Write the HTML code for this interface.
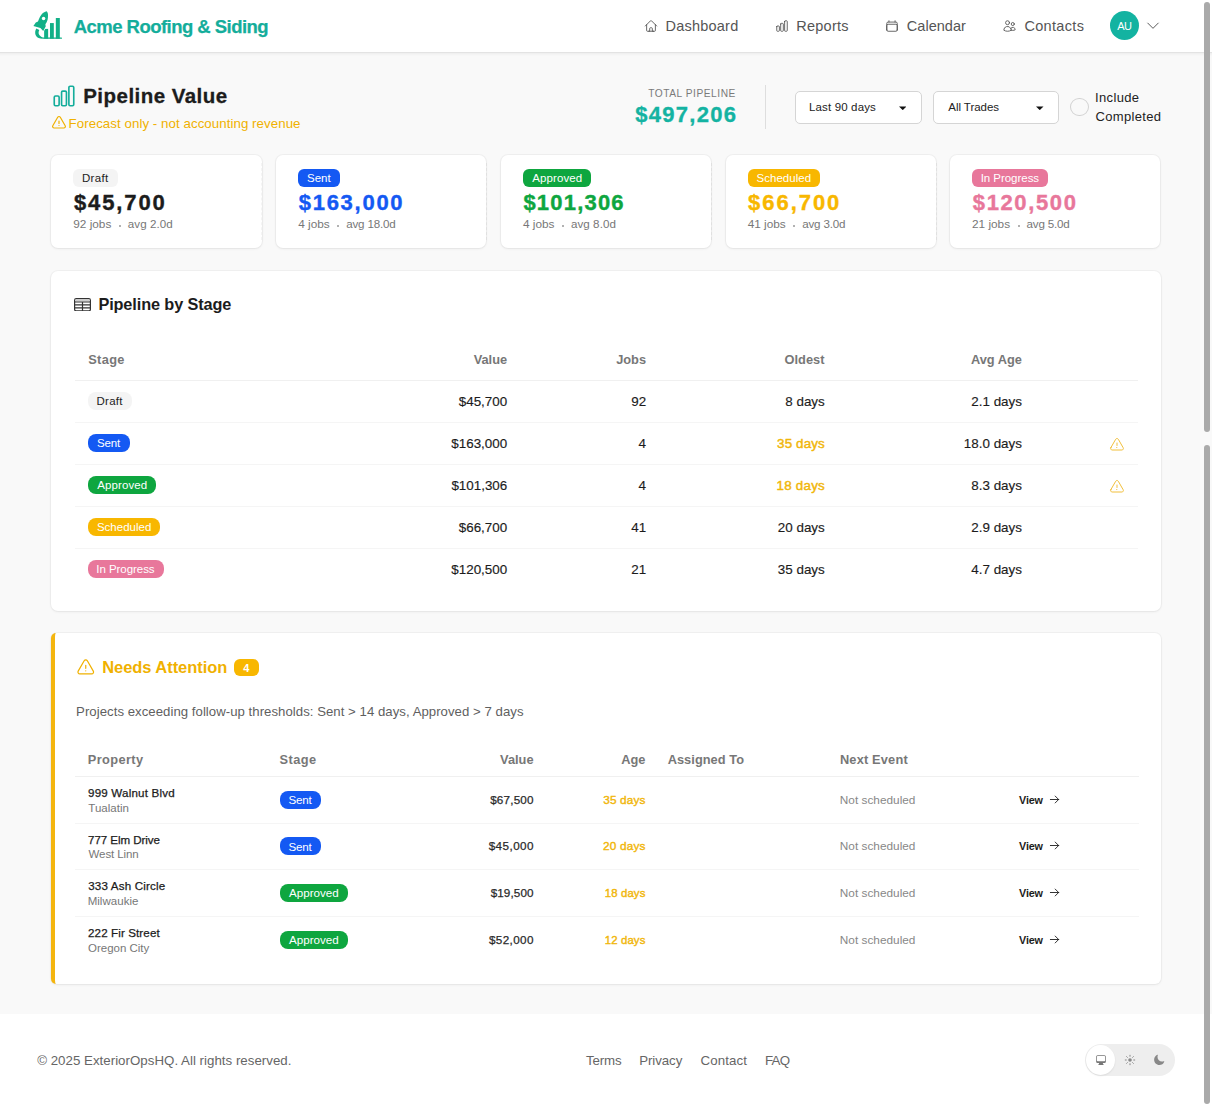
<!DOCTYPE html>
<html><head><meta charset="utf-8"><title>Pipeline Value</title>
<style>
html,body{margin:0;padding:0;}
body{width:1212px;height:1106px;overflow:hidden;position:relative;background:#f9f9f9;font-family:"Liberation Sans",sans-serif;}
.t{position:absolute;white-space:nowrap;font-family:"Liberation Sans",sans-serif;}
</style></head><body>
<div style="position:absolute;left:0px;top:0px;width:1212px;height:52px;background:#fff"></div>
<div style="position:absolute;left:0px;top:52px;width:1212px;height:1px;background:#e3e3e3"></div>
<div style="position:absolute;left:0px;top:53px;width:1212px;height:3px;background:linear-gradient(rgba(0,0,0,.045),rgba(0,0,0,0))"></div>
<svg style="position:absolute;left:30px;top:8px;" width="36" height="34" viewBox="30 8 36 34"><g fill="#12b087"><path d="M36.3,28.6 C35.2,30.5 34.9,32.8 35.5,34.8 C36.1,36.4 37.2,37.6 38.6,38.1 C39.8,38.6 41,38.8 42.3,38.8 L42.9,37.5 C41.6,37.1 40.6,36.5 39.8,35.6 C38.9,34.6 38.5,33.4 38.6,32.5 C38.6,31.6 38.9,30.8 39.3,30.1 Z"/><rect x="44.14" y="28.9" width="4" height="9.8"/><rect x="49.98" y="23.06" width="3.84" height="15.6"/><rect x="55.82" y="18" width="4" height="20.7"/><rect x="42.3" y="37.5" width="19.7" height="1.25" rx="0.6"/><path stroke="#fff" stroke-width="1.4" stroke-linejoin="round" style="paint-order:stroke fill" d="M46.6,11.2 C47.6,12.2 48.1,13.5 48.0,15 C48.1,16.8 47.9,18.3 47.6,19.7 C47.1,21.5 46.3,23 45.4,24.3 L45.7,26.4 L43.2,30.9 L40.4,28 L33.4,26 L35.8,22.5 L38,21.5 C38.6,19.8 39.1,18.3 39.9,16.9 C40.8,15.3 41.8,14 42.9,13.1 C44.1,12.2 45.3,11.6 46.6,11.2 Z"/></g><circle cx="43.55" cy="18.6" r="1.75" fill="#fff"/></svg>
<div class="t" style="left:73.74px;top:18.00px;font-size:18.5px;line-height:18.5px;font-weight:700;color:#14ad9b;letter-spacing:-0.534px;-webkit-text-stroke:0.25px #14ad9b">Acme Roofing &amp; Siding</div>
<svg style="position:absolute;left:644px;top:19px;" width="14" height="14" viewBox="0 0 24 24"><path fill="none" stroke="#555" stroke-width="1.5" stroke-linecap="round" stroke-linejoin="round" d="m2.25 12 8.954-8.955c.44-.439 1.152-.439 1.591 0L21.75 12M4.5 9.75v10.125c0 .621.504 1.125 1.125 1.125H9.75v-4.875c0-.621.504-1.125 1.125-1.125h2.25c.621 0 1.125.504 1.125 1.125V21h4.125c.621 0 1.125-.504 1.125-1.125V9.75M8.25 21h8.25"/></svg>
<div class="t" style="left:665.60px;top:19.00px;font-size:14.5px;line-height:14.5px;font-weight:400;color:#555;letter-spacing:0.212px;">Dashboard</div>
<svg style="position:absolute;left:775px;top:19px;" width="14" height="14" viewBox="0 0 24 24"><path fill="none" stroke="#555" stroke-width="1.5" stroke-linecap="round" stroke-linejoin="round" d="M3 13.125C3 12.504 3.504 12 4.125 12h2.25c.621 0 1.125.504 1.125 1.125v6.75C7.5 20.496 6.996 21 6.375 21h-2.25A1.125 1.125 0 0 1 3 19.875v-6.75ZM9.75 8.625c0-.621.504-1.125 1.125-1.125h2.25c.621 0 1.125.504 1.125 1.125v11.25c0 .621-.504 1.125-1.125 1.125h-2.25a1.125 1.125 0 0 1-1.125-1.125V8.625ZM16.5 4.125c0-.621.504-1.125 1.125-1.125h2.25C20.496 3 21 3.504 21 4.125v15.75c0 .621-.504 1.125-1.125 1.125h-2.25a1.125 1.125 0 0 1-1.125-1.125V4.125Z"/></svg>
<div class="t" style="left:796.30px;top:19.00px;font-size:14.5px;line-height:14.5px;font-weight:400;color:#555;letter-spacing:0.236px;">Reports</div>
<svg style="position:absolute;left:885px;top:19px;" width="14" height="14" viewBox="0 0 24 24"><path fill="none" stroke="#555" stroke-width="1.5" stroke-linecap="round" stroke-linejoin="round" d="M6.75 3v2.25M17.25 3v2.25M3 18.75V7.5a2.25 2.25 0 0 1 2.25-2.25h13.5A2.25 2.25 0 0 1 21 7.5v11.25m-18 0A2.25 2.25 0 0 0 5.25 21h13.5A2.25 2.25 0 0 0 21 18.75m-18 0v-7.5A2.25 2.25 0 0 1 5.25 9h13.5A2.25 2.25 0 0 1 21 11.25v7.5"/></svg>
<div class="t" style="left:906.77px;top:19.00px;font-size:14.5px;line-height:14.5px;font-weight:400;color:#555;letter-spacing:0.044px;">Calendar</div>
<svg style="position:absolute;left:1002px;top:19px;" width="15" height="14" viewBox="0 0 24 24"><path fill="none" stroke="#555" stroke-width="1.5" stroke-linecap="round" stroke-linejoin="round" d="M15 19.128a9.38 9.38 0 0 0 2.625.372 9.337 9.337 0 0 0 4.121-.952 4.125 4.125 0 0 0-7.533-2.493M15 19.128v-.003c0-1.113-.285-2.16-.786-3.07M15 19.128v.106A12.318 12.318 0 0 1 8.624 21c-2.331 0-4.512-.645-6.374-1.766l-.001-.109a6.375 6.375 0 0 1 11.964-3.07M12 6.375a3.375 3.375 0 1 1-6.75 0 3.375 3.375 0 0 1 6.75 0Zm8.25 2.25a2.625 2.625 0 1 1-5.25 0 2.625 2.625 0 0 1 5.25 0Z"/></svg>
<div class="t" style="left:1024.38px;top:19.00px;font-size:14.5px;line-height:14.5px;font-weight:400;color:#555;letter-spacing:0.328px;">Contacts</div>
<div style="position:absolute;left:1110px;top:11px;width:29px;height:29px;border-radius:50%;background:#13b3a1"></div>
<div class="t" style="left:1117.17px;top:21.00px;font-size:11px;line-height:11px;font-weight:400;color:#fff;letter-spacing:-0.610px;">AU</div>
<svg style="position:absolute;left:1146px;top:20px;" width="14" height="12" viewBox="0 0 24 20"><path fill="none" stroke="#444" stroke-width="1.5" stroke-linecap="round" stroke-linejoin="round" stroke-width="2" d="m21 5-9 9-9-9"/></svg>
<svg style="position:absolute;left:51px;top:83px;" width="26" height="26" viewBox="0 0 24 24"><path fill="none" stroke="#14ad9b" stroke-width="1.5" d="M3 13.125C3 12.504 3.504 12 4.125 12h2.25c.621 0 1.125.504 1.125 1.125v6.75C7.5 20.496 6.996 21 6.375 21h-2.25A1.125 1.125 0 0 1 3 19.875v-6.75ZM9.75 8.625c0-.621.504-1.125 1.125-1.125h2.25c.621 0 1.125.504 1.125 1.125v11.25c0 .621-.504 1.125-1.125 1.125h-2.25a1.125 1.125 0 0 1-1.125-1.125V8.625ZM16.5 4.125c0-.621.504-1.125 1.125-1.125h2.25C20.496 3 21 3.504 21 4.125v15.75c0 .621-.504 1.125-1.125 1.125h-2.25a1.125 1.125 0 0 1-1.125-1.125V4.125Z"/></svg>
<div class="t" style="left:83.22px;top:86.00px;font-size:20.5px;line-height:20.5px;font-weight:700;color:#1c1c1c;letter-spacing:0.468px;-webkit-text-stroke:0.3px #1c1c1c">Pipeline Value</div>
<svg style="position:absolute;left:50.6px;top:114.6px;" width="16" height="16" viewBox="0 0 24 24"><path fill="none" stroke="#f0b100" stroke-width="1.8" stroke-linecap="round" stroke-linejoin="round" d="M12 9v3.75m-9.303 3.376c-.866 1.5.217 3.374 1.948 3.374h14.71c1.73 0 2.813-1.874 1.948-3.374L13.949 3.378c-.866-1.5-3.032-1.5-3.898 0L2.697 16.126ZM12 15.75h.007v.008H12v-.008Z"/></svg>
<div class="t" style="left:68.60px;top:117.00px;font-size:13.3px;line-height:13.3px;font-weight:400;color:#f0b100;letter-spacing:0.055px;">Forecast only - not accounting revenue</div>
<div class="t" style="left:648.17px;top:89.00px;font-size:10.2px;line-height:10.2px;font-weight:400;color:#7a7a7a;letter-spacing:0.541px;">TOTAL PIPELINE</div>
<div class="t" style="left:635.33px;top:104.00px;font-size:22px;line-height:22px;font-weight:700;color:#14b3a2;letter-spacing:1.258px;-webkit-text-stroke:0.35px #14b3a2">$497,206</div>
<div style="position:absolute;left:764.5px;top:85px;width:1.5px;height:44px;background:#dedede"></div>
<div style="position:absolute;left:794.5px;top:91px;width:127.0px;height:32.5px;background:#fff;border:1px solid #d5d5d5;border-radius:5px;box-sizing:border-box"></div>
<div class="t" style="left:809.05px;top:102.00px;font-size:11.5px;line-height:11.5px;font-weight:400;color:#222;letter-spacing:0.141px;">Last 90 days</div>
<svg style="position:absolute;left:898.5px;top:105.5px;" width="7.5" height="4.5" viewBox="0 0 8 4"><path d="M0 0H8L4 4Z" fill="#111"/></svg>
<div style="position:absolute;left:932.8px;top:91px;width:126.0px;height:32.5px;background:#fff;border:1px solid #d5d5d5;border-radius:5px;box-sizing:border-box"></div>
<div class="t" style="left:948.27px;top:102.00px;font-size:11.5px;line-height:11.5px;font-weight:400;color:#222;letter-spacing:-0.046px;">All Trades</div>
<svg style="position:absolute;left:1036.3px;top:105.5px;" width="7.5" height="4.5" viewBox="0 0 8 4"><path d="M0 0H8L4 4Z" fill="#111"/></svg>
<div style="position:absolute;left:1070.4px;top:98px;width:18.199999999999818px;height:18px;border:1px solid #d2d2d2;border-radius:50%;background:#f9f9f9;box-sizing:border-box"></div>
<div class="t" style="left:1095.00px;top:91.00px;font-size:13px;line-height:13px;font-weight:400;color:#222;letter-spacing:0.360px;">Include</div>
<div class="t" style="left:1095.55px;top:110.00px;font-size:13px;line-height:13px;font-weight:400;color:#222;letter-spacing:0.313px;">Completed</div>
<div style="position:absolute;left:51.4px;top:154.5px;width:210.29999999999998px;height:93.5px;background:#fff;border-radius:7px;box-shadow:0 0 0 1px rgba(0,0,0,.035),0 1px 3px rgba(0,0,0,.06)"></div>
<div style="position:absolute;left:260.4px;top:163px;width:1.0px;height:77px;border-right:1px dashed rgba(0,0,0,.045)"></div>
<div style="position:absolute;left:73.4px;top:169.1px;width:44.2px;height:18.099999999999994px;background:#f4f4f4;border-radius:6px"></div>
<div class="t" style="left:81.95px;top:173.00px;font-size:11.5px;line-height:11.5px;font-weight:400;color:#222;letter-spacing:0.327px;">Draft</div>
<div class="t" style="left:74.02px;top:192.00px;font-size:22px;line-height:22px;font-weight:700;color:#1c1c1c;letter-spacing:1.863px;-webkit-text-stroke:0.4px #1c1c1c">$45,700</div>
<div class="t" style="left:73.24px;top:219.00px;font-size:11.8px;line-height:11.8px;font-weight:400;color:#777;letter-spacing:0.000px;">92 jobs</div>
<div style="position:absolute;left:118.8815px;top:224.5px;width:2.0px;height:2.0px;background:#999;border-radius:50%"></div>
<div class="t" style="left:127.79px;top:218.00px;font-size:11.6px;line-height:11.6px;font-weight:400;color:#777;letter-spacing:0.064px;">avg 2.0d</div>
<div style="position:absolute;left:276.09999999999997px;top:154.5px;width:210.3px;height:93.5px;background:#fff;border-radius:7px;box-shadow:0 0 0 1px rgba(0,0,0,.035),0 1px 3px rgba(0,0,0,.06)"></div>
<div style="position:absolute;left:485.09999999999997px;top:163px;width:1.0px;height:77px;border-right:1px dashed rgba(0,0,0,.045)"></div>
<div style="position:absolute;left:298.09999999999997px;top:169.1px;width:41.89999999999998px;height:18.099999999999994px;background:#1459f3;border-radius:6px"></div>
<div class="t" style="left:307.08px;top:173.00px;font-size:11.5px;line-height:11.5px;font-weight:400;color:#fff;letter-spacing:-0.053px;">Sent</div>
<div class="t" style="left:298.72px;top:192.00px;font-size:22px;line-height:22px;font-weight:700;color:#1459f3;letter-spacing:1.731px;-webkit-text-stroke:0.4px #1459f3">$163,000</div>
<div class="t" style="left:298.23px;top:219.00px;font-size:11.8px;line-height:11.8px;font-weight:400;color:#777;letter-spacing:0.000px;">4 jobs</div>
<div style="position:absolute;left:337.29799999999994px;top:224.5px;width:2.0px;height:2.0px;background:#999;border-radius:50%"></div>
<div class="t" style="left:346.20px;top:218.00px;font-size:11.6px;line-height:11.6px;font-weight:400;color:#777;letter-spacing:-0.167px;">avg 18.0d</div>
<div style="position:absolute;left:500.79999999999995px;top:154.5px;width:210.29999999999995px;height:93.5px;background:#fff;border-radius:7px;box-shadow:0 0 0 1px rgba(0,0,0,.035),0 1px 3px rgba(0,0,0,.06)"></div>
<div style="position:absolute;left:709.8px;top:163px;width:1.0px;height:77px;border-right:1px dashed rgba(0,0,0,.045)"></div>
<div style="position:absolute;left:522.8px;top:169.1px;width:68.20000000000005px;height:18.099999999999994px;background:#0ea63f;border-radius:6px"></div>
<div class="t" style="left:532.27px;top:173.00px;font-size:11.5px;line-height:11.5px;font-weight:400;color:#fff;letter-spacing:0.104px;">Approved</div>
<div class="t" style="left:523.42px;top:192.00px;font-size:22px;line-height:22px;font-weight:700;color:#0ea63f;letter-spacing:1.201px;-webkit-text-stroke:0.4px #0ea63f">$101,306</div>
<div class="t" style="left:522.93px;top:219.00px;font-size:11.8px;line-height:11.8px;font-weight:400;color:#777;letter-spacing:0.000px;">4 jobs</div>
<div style="position:absolute;left:561.9979999999999px;top:224.5px;width:2.0px;height:2.0px;background:#999;border-radius:50%"></div>
<div class="t" style="left:570.90px;top:218.00px;font-size:11.6px;line-height:11.6px;font-weight:400;color:#777;letter-spacing:0.076px;">avg 8.0d</div>
<div style="position:absolute;left:725.4999999999999px;top:154.5px;width:210.30000000000007px;height:93.5px;background:#fff;border-radius:7px;box-shadow:0 0 0 1px rgba(0,0,0,.035),0 1px 3px rgba(0,0,0,.06)"></div>
<div style="position:absolute;left:934.4999999999999px;top:163px;width:1.0px;height:77px;border-right:1px dashed rgba(0,0,0,.045)"></div>
<div style="position:absolute;left:747.4999999999999px;top:169.1px;width:72.39999999999998px;height:18.099999999999994px;background:#f8b700;border-radius:6px"></div>
<div class="t" style="left:756.48px;top:173.00px;font-size:11.5px;line-height:11.5px;font-weight:400;color:#fff;letter-spacing:0.037px;">Scheduled</div>
<div class="t" style="left:748.12px;top:192.00px;font-size:22px;line-height:22px;font-weight:700;color:#f8b700;letter-spacing:1.947px;-webkit-text-stroke:0.4px #f8b700">$66,700</div>
<div class="t" style="left:747.63px;top:219.00px;font-size:11.8px;line-height:11.8px;font-weight:400;color:#777;letter-spacing:0.000px;">41 jobs</div>
<div style="position:absolute;left:793.2764999999998px;top:224.5px;width:2.0px;height:2.0px;background:#999;border-radius:50%"></div>
<div class="t" style="left:802.18px;top:218.00px;font-size:11.6px;line-height:11.6px;font-weight:400;color:#777;letter-spacing:-0.163px;">avg 3.0d</div>
<div style="position:absolute;left:950.1999999999999px;top:154.5px;width:210.30000000000007px;height:93.5px;background:#fff;border-radius:7px;box-shadow:0 0 0 1px rgba(0,0,0,.035),0 1px 3px rgba(0,0,0,.06)"></div>
<div style="position:absolute;left:972.1999999999999px;top:169.1px;width:75.99999999999989px;height:18.099999999999994px;background:#e8779b;border-radius:6px"></div>
<div class="t" style="left:980.64px;top:173.00px;font-size:11.5px;line-height:11.5px;font-weight:400;color:#fff;letter-spacing:-0.033px;">In Progress</div>
<div class="t" style="left:972.82px;top:192.00px;font-size:22px;line-height:22px;font-weight:700;color:#e8779b;letter-spacing:1.616px;-webkit-text-stroke:0.4px #e8779b">$120,500</div>
<div class="t" style="left:972.01px;top:219.00px;font-size:11.8px;line-height:11.8px;font-weight:400;color:#777;letter-spacing:0.000px;">21 jobs</div>
<div style="position:absolute;left:1017.6519999999999px;top:224.5px;width:2.0px;height:2.0px;background:#999;border-radius:50%"></div>
<div class="t" style="left:1026.56px;top:218.00px;font-size:11.6px;line-height:11.6px;font-weight:400;color:#777;letter-spacing:-0.174px;">avg 5.0d</div>
<div style="position:absolute;left:51.4px;top:271.4px;width:1109.3px;height:340.1px;background:#fff;border-radius:7px;box-shadow:0 0 0 1px rgba(0,0,0,.03),0 1px 3px rgba(0,0,0,.06)"></div>
<svg style="position:absolute;left:74px;top:297.5px;" width="17" height="13.5" viewBox="0 0 17 13.5"><g fill="none" stroke="#333" stroke-width="1.2"><rect x="0.6" y="0.6" width="15.8" height="12.3" rx="1.6"/><path d="M0.6 3.9H16.4M0.6 6.9H16.4M0.6 9.9H16.4M8.5 3.9V12.9"/></g><rect x="1.4" y="1.4" width="14.2" height="2" fill="#ccc"/></svg>
<div class="t" style="left:98.40px;top:296.00px;font-size:16.3px;line-height:16.3px;font-weight:700;color:#1c1c1c;letter-spacing:-0.115px;">Pipeline by Stage</div>
<div class="t" style="left:88.22px;top:354.00px;font-size:12.8px;line-height:12.8px;font-weight:700;color:#777;letter-spacing:0.338px;">Stage</div>
<div class="t" style="left:473.68px;top:354.00px;font-size:12.8px;line-height:12.8px;font-weight:700;color:#777;letter-spacing:0.000px;">Value</div>
<div class="t" style="left:616.16px;top:354.00px;font-size:12.8px;line-height:12.8px;font-weight:700;color:#777;letter-spacing:0.000px;">Jobs</div>
<div class="t" style="left:784.62px;top:354.00px;font-size:12.8px;line-height:12.8px;font-weight:700;color:#777;letter-spacing:0.000px;">Oldest</div>
<div class="t" style="left:970.97px;top:354.00px;font-size:12.8px;line-height:12.8px;font-weight:700;color:#777;letter-spacing:0.000px;">Avg Age</div>
<div style="position:absolute;left:75px;top:380px;width:1063px;height:1px;background:#f0f0f0"></div>
<div style="position:absolute;left:75px;top:422px;width:1063px;height:1px;background:#f5f5f5"></div>
<div style="position:absolute;left:87.7px;top:392px;width:44.3px;height:18px;background:#f4f4f4;border-radius:8px"></div>
<div class="t" style="left:96.45px;top:396.00px;font-size:11.5px;line-height:11.5px;font-weight:400;color:#222;letter-spacing:0.302px;">Draft</div>
<div class="t" style="left:458.79px;top:395.00px;font-size:13.4px;line-height:13.4px;font-weight:400;color:#1c1c1c;letter-spacing:0.000px;-webkit-text-stroke:0.15px #1c1c1c">$45,700</div>
<div class="t" style="left:631.30px;top:395.00px;font-size:13.4px;line-height:13.4px;font-weight:400;color:#1c1c1c;letter-spacing:0.000px;-webkit-text-stroke:0.15px #1c1c1c">92</div>
<div class="t" style="left:785.27px;top:395.00px;font-size:13.4px;line-height:13.4px;font-weight:400;color:#1c1c1c;letter-spacing:0.000px;-webkit-text-stroke:0.15px #1c1c1c">8 days</div>
<div class="t" style="left:971.32px;top:395.00px;font-size:13.4px;line-height:13.4px;font-weight:400;color:#1c1c1c;letter-spacing:0.000px;-webkit-text-stroke:0.15px #1c1c1c">2.1 days</div>
<div style="position:absolute;left:75px;top:464px;width:1063px;height:1px;background:#f5f5f5"></div>
<div style="position:absolute;left:87.7px;top:434px;width:41.89999999999999px;height:18px;background:#1459f3;border-radius:8px"></div>
<div class="t" style="left:96.88px;top:438.00px;font-size:11.5px;line-height:11.5px;font-weight:400;color:#fff;letter-spacing:-0.119px;">Sent</div>
<div class="t" style="left:451.32px;top:437.00px;font-size:13.4px;line-height:13.4px;font-weight:400;color:#1c1c1c;letter-spacing:0.000px;-webkit-text-stroke:0.15px #1c1c1c">$163,000</div>
<div class="t" style="left:638.43px;top:437.00px;font-size:13.4px;line-height:13.4px;font-weight:400;color:#1c1c1c;letter-spacing:0.000px;-webkit-text-stroke:0.15px #1c1c1c">4</div>
<div class="t" style="left:777.10px;top:437.00px;font-size:13.4px;line-height:13.4px;font-weight:400;color:#f1b60a;letter-spacing:0.123px;-webkit-text-stroke:0.45px #f1b60a">35 days</div>
<svg style="position:absolute;left:1108.5px;top:436.5px;" width="16" height="16" viewBox="0 0 24 24"><path fill="none" stroke="#f2bf3a" stroke-width="1.5" stroke-linecap="round" stroke-linejoin="round" d="M12 9v3.75m-9.303 3.376c-.866 1.5.217 3.374 1.948 3.374h14.71c1.73 0 2.813-1.874 1.948-3.374L13.949 3.378c-.866-1.5-3.032-1.5-3.898 0L2.697 16.126ZM12 15.75h.007v.008H12v-.008Z"/></svg>
<div class="t" style="left:963.85px;top:437.00px;font-size:13.4px;line-height:13.4px;font-weight:400;color:#1c1c1c;letter-spacing:0.000px;-webkit-text-stroke:0.15px #1c1c1c">18.0 days</div>
<div style="position:absolute;left:75px;top:506px;width:1063px;height:1px;background:#f5f5f5"></div>
<div style="position:absolute;left:87.7px;top:476px;width:68.2px;height:18px;background:#0ea63f;border-radius:8px"></div>
<div class="t" style="left:97.37px;top:480.00px;font-size:11.5px;line-height:11.5px;font-weight:400;color:#fff;letter-spacing:0.075px;">Approved</div>
<div class="t" style="left:451.39px;top:479.00px;font-size:13.4px;line-height:13.4px;font-weight:400;color:#1c1c1c;letter-spacing:0.000px;-webkit-text-stroke:0.15px #1c1c1c">$101,306</div>
<div class="t" style="left:638.43px;top:479.00px;font-size:13.4px;line-height:13.4px;font-weight:400;color:#1c1c1c;letter-spacing:0.000px;-webkit-text-stroke:0.15px #1c1c1c">4</div>
<div class="t" style="left:776.60px;top:479.00px;font-size:13.4px;line-height:13.4px;font-weight:400;color:#f1b60a;letter-spacing:0.207px;-webkit-text-stroke:0.45px #f1b60a">18 days</div>
<svg style="position:absolute;left:1108.5px;top:478.5px;" width="16" height="16" viewBox="0 0 24 24"><path fill="none" stroke="#f2bf3a" stroke-width="1.5" stroke-linecap="round" stroke-linejoin="round" d="M12 9v3.75m-9.303 3.376c-.866 1.5.217 3.374 1.948 3.374h14.71c1.73 0 2.813-1.874 1.948-3.374L13.949 3.378c-.866-1.5-3.032-1.5-3.898 0L2.697 16.126ZM12 15.75h.007v.008H12v-.008Z"/></svg>
<div class="t" style="left:971.32px;top:479.00px;font-size:13.4px;line-height:13.4px;font-weight:400;color:#1c1c1c;letter-spacing:0.000px;-webkit-text-stroke:0.15px #1c1c1c">8.3 days</div>
<div style="position:absolute;left:75px;top:548px;width:1063px;height:1px;background:#f5f5f5"></div>
<div style="position:absolute;left:87.7px;top:518px;width:72.40000000000002px;height:18px;background:#f8b700;border-radius:8px"></div>
<div class="t" style="left:96.88px;top:522.00px;font-size:11.5px;line-height:11.5px;font-weight:400;color:#fff;letter-spacing:0.012px;">Scheduled</div>
<div class="t" style="left:458.79px;top:521.00px;font-size:13.4px;line-height:13.4px;font-weight:400;color:#1c1c1c;letter-spacing:0.000px;-webkit-text-stroke:0.15px #1c1c1c">$66,700</div>
<div class="t" style="left:631.26px;top:521.00px;font-size:13.4px;line-height:13.4px;font-weight:400;color:#1c1c1c;letter-spacing:0.000px;-webkit-text-stroke:0.15px #1c1c1c">41</div>
<div class="t" style="left:777.84px;top:521.00px;font-size:13.4px;line-height:13.4px;font-weight:400;color:#1c1c1c;letter-spacing:0.000px;-webkit-text-stroke:0.15px #1c1c1c">20 days</div>
<div class="t" style="left:971.32px;top:521.00px;font-size:13.4px;line-height:13.4px;font-weight:400;color:#1c1c1c;letter-spacing:0.000px;-webkit-text-stroke:0.15px #1c1c1c">2.9 days</div>
<div style="position:absolute;left:87.7px;top:560px;width:75.99999999999999px;height:18px;background:#e8779b;border-radius:8px"></div>
<div class="t" style="left:96.34px;top:564.00px;font-size:11.5px;line-height:11.5px;font-weight:400;color:#fff;letter-spacing:-0.053px;">In Progress</div>
<div class="t" style="left:451.32px;top:563.00px;font-size:13.4px;line-height:13.4px;font-weight:400;color:#1c1c1c;letter-spacing:0.000px;-webkit-text-stroke:0.15px #1c1c1c">$120,500</div>
<div class="t" style="left:631.26px;top:563.00px;font-size:13.4px;line-height:13.4px;font-weight:400;color:#1c1c1c;letter-spacing:0.000px;-webkit-text-stroke:0.15px #1c1c1c">21</div>
<div class="t" style="left:777.84px;top:563.00px;font-size:13.4px;line-height:13.4px;font-weight:400;color:#1c1c1c;letter-spacing:0.000px;-webkit-text-stroke:0.15px #1c1c1c">35 days</div>
<div class="t" style="left:971.32px;top:563.00px;font-size:13.4px;line-height:13.4px;font-weight:400;color:#1c1c1c;letter-spacing:0.000px;-webkit-text-stroke:0.15px #1c1c1c">4.7 days</div>
<div style="position:absolute;left:51px;top:633px;width:1109.7px;height:351px;background:#fff;border-radius:6px;box-shadow:0 0 0 1px rgba(0,0,0,.03),0 1px 3px rgba(0,0,0,.06)"></div>
<div style="position:absolute;left:51px;top:633px;width:5px;height:351px;border-left:4px solid #f4b50f;border-radius:6px 0 0 6px;box-sizing:border-box"></div>
<svg style="position:absolute;left:76.2px;top:657.6px;" width="19.5" height="19.5" viewBox="0 0 24 24"><path fill="none" stroke="#f0b100" stroke-width="1.5" stroke-linecap="round" stroke-linejoin="round" d="M12 9v3.75m-9.303 3.376c-.866 1.5.217 3.374 1.948 3.374h14.71c1.73 0 2.813-1.874 1.948-3.374L13.949 3.378c-.866-1.5-3.032-1.5-3.898 0L2.697 16.126ZM12 15.75h.007v.008H12v-.008Z"/></svg>
<div class="t" style="left:102.19px;top:659.00px;font-size:16.5px;line-height:16.5px;font-weight:700;color:#f0b100;letter-spacing:-0.057px;">Needs Attention</div>
<div style="position:absolute;left:233.8px;top:658.9px;width:25.69999999999999px;height:17.600000000000023px;background:#f8b700;border-radius:6px"></div>
<div class="t" style="left:243.14px;top:663.00px;font-size:11px;line-height:11px;font-weight:700;color:#fff;letter-spacing:1.115px;">4</div>
<div class="t" style="left:76.11px;top:705.00px;font-size:13.2px;line-height:13.2px;font-weight:400;color:#5f5f5f;letter-spacing:0.033px;">Projects exceeding follow-up thresholds: Sent &gt; 14 days, Approved &gt; 7 days</div>
<div class="t" style="left:87.74px;top:754.00px;font-size:12.8px;line-height:12.8px;font-weight:700;color:#777;letter-spacing:0.384px;">Property</div>
<div class="t" style="left:279.62px;top:754.00px;font-size:12.8px;line-height:12.8px;font-weight:700;color:#777;letter-spacing:0.438px;">Stage</div>
<div class="t" style="left:667.68px;top:754.00px;font-size:12.8px;line-height:12.8px;font-weight:700;color:#777;letter-spacing:0.046px;">Assigned To</div>
<div class="t" style="left:839.94px;top:754.00px;font-size:12.8px;line-height:12.8px;font-weight:700;color:#777;letter-spacing:0.176px;">Next Event</div>
<div class="t" style="left:500.08px;top:754.00px;font-size:12.8px;line-height:12.8px;font-weight:700;color:#777;letter-spacing:0.000px;">Value</div>
<div class="t" style="left:621.26px;top:754.00px;font-size:12.8px;line-height:12.8px;font-weight:700;color:#777;letter-spacing:0.000px;">Age</div>
<div style="position:absolute;left:75px;top:776px;width:1064px;height:1px;background:#f0f0f0"></div>
<div style="position:absolute;left:75px;top:822.8px;width:1064px;height:1.0px;background:#f5f5f5"></div>
<div class="t" style="left:88.05px;top:787.00px;font-size:11.6px;line-height:11.6px;font-weight:400;color:#1c1c1c;letter-spacing:0.190px;-webkit-text-stroke:0.25px #1c1c1c">999 Walnut Blvd</div>
<div class="t" style="left:88.34px;top:803.00px;font-size:11.5px;line-height:11.5px;font-weight:400;color:#777;letter-spacing:0.014px;">Tualatin</div>
<div style="position:absolute;left:280px;top:790.7px;width:41.19999999999999px;height:18.09999999999991px;background:#1459f3;border-radius:8px"></div>
<div class="t" style="left:288.48px;top:794.00px;font-size:11.6px;line-height:11.6px;font-weight:400;color:#fff;letter-spacing:-0.186px;">Sent</div>
<div class="t" style="left:490.18px;top:794.00px;font-size:11.7px;line-height:11.7px;font-weight:400;color:#2a2a2a;letter-spacing:0.182px;-webkit-text-stroke:0.25px #2a2a2a">$67,500</div>
<div class="t" style="left:603.26px;top:795.00px;font-size:11.8px;line-height:11.8px;font-weight:400;color:#f1b60a;letter-spacing:0.138px;-webkit-text-stroke:0.4px #f1b60a">35 days</div>
<div class="t" style="left:839.83px;top:795.00px;font-size:11.8px;line-height:11.8px;font-weight:400;color:#888;letter-spacing:0.015px;">Not scheduled</div>
<div class="t" style="left:1019.12px;top:795.00px;font-size:10.8px;line-height:10.8px;font-weight:700;color:#1c1c1c;letter-spacing:-0.185px;">View</div>
<svg style="position:absolute;left:1048.5px;top:793.8px;" width="11" height="11" viewBox="0 0 24 24"><path fill="none" stroke="#222" stroke-width="2" stroke-linecap="round" stroke-linejoin="round" d="M13.5 4.5 21 12m0 0-7.5 7.5M21 12H3"/></svg>
<div style="position:absolute;left:75px;top:869.4px;width:1064px;height:1.0px;background:#f5f5f5"></div>
<div class="t" style="left:88.02px;top:834.00px;font-size:11.6px;line-height:11.6px;font-weight:400;color:#1c1c1c;letter-spacing:-0.065px;-webkit-text-stroke:0.25px #1c1c1c">777 Elm Drive</div>
<div class="t" style="left:88.54px;top:849.00px;font-size:11.5px;line-height:11.5px;font-weight:400;color:#777;letter-spacing:-0.092px;">West Linn</div>
<div style="position:absolute;left:280px;top:837.3000000000001px;width:41.19999999999999px;height:18.09999999999991px;background:#1459f3;border-radius:8px"></div>
<div class="t" style="left:288.48px;top:841.00px;font-size:11.6px;line-height:11.6px;font-weight:400;color:#fff;letter-spacing:-0.186px;">Sent</div>
<div class="t" style="left:488.68px;top:840.00px;font-size:11.7px;line-height:11.7px;font-weight:400;color:#2a2a2a;letter-spacing:0.432px;-webkit-text-stroke:0.25px #2a2a2a">$45,000</div>
<div class="t" style="left:603.11px;top:841.00px;font-size:11.8px;line-height:11.8px;font-weight:400;color:#f1b60a;letter-spacing:0.162px;-webkit-text-stroke:0.4px #f1b60a">20 days</div>
<div class="t" style="left:839.83px;top:841.00px;font-size:11.8px;line-height:11.8px;font-weight:400;color:#888;letter-spacing:0.015px;">Not scheduled</div>
<div class="t" style="left:1019.12px;top:841.00px;font-size:10.8px;line-height:10.8px;font-weight:700;color:#1c1c1c;letter-spacing:-0.185px;">View</div>
<svg style="position:absolute;left:1048.5px;top:840.4px;" width="11" height="11" viewBox="0 0 24 24"><path fill="none" stroke="#222" stroke-width="2" stroke-linecap="round" stroke-linejoin="round" d="M13.5 4.5 21 12m0 0-7.5 7.5M21 12H3"/></svg>
<div style="position:absolute;left:75px;top:916.0px;width:1064px;height:1.0px;background:#f5f5f5"></div>
<div class="t" style="left:88.16px;top:880.00px;font-size:11.6px;line-height:11.6px;font-weight:400;color:#1c1c1c;letter-spacing:0.180px;-webkit-text-stroke:0.25px #1c1c1c">333 Ash Circle</div>
<div class="t" style="left:87.65px;top:896.00px;font-size:11.5px;line-height:11.5px;font-weight:400;color:#777;letter-spacing:0.044px;">Milwaukie</div>
<div style="position:absolute;left:280px;top:883.9000000000001px;width:67.5px;height:18.09999999999991px;background:#0ea63f;border-radius:8px"></div>
<div class="t" style="left:288.97px;top:887.00px;font-size:11.6px;line-height:11.6px;font-weight:400;color:#fff;letter-spacing:0.015px;">Approved</div>
<div class="t" style="left:490.68px;top:887.00px;font-size:11.7px;line-height:11.7px;font-weight:400;color:#2a2a2a;letter-spacing:0.098px;-webkit-text-stroke:0.25px #2a2a2a">$19,500</div>
<div class="t" style="left:604.75px;top:888.00px;font-size:11.4px;line-height:11.4px;font-weight:400;color:#f1b60a;letter-spacing:0.121px;-webkit-text-stroke:0.4px #f1b60a">18 days</div>
<div class="t" style="left:839.83px;top:888.00px;font-size:11.8px;line-height:11.8px;font-weight:400;color:#888;letter-spacing:0.015px;">Not scheduled</div>
<div class="t" style="left:1019.12px;top:888.00px;font-size:10.8px;line-height:10.8px;font-weight:700;color:#1c1c1c;letter-spacing:-0.185px;">View</div>
<svg style="position:absolute;left:1048.5px;top:887.0px;" width="11" height="11" viewBox="0 0 24 24"><path fill="none" stroke="#222" stroke-width="2" stroke-linecap="round" stroke-linejoin="round" d="M13.5 4.5 21 12m0 0-7.5 7.5M21 12H3"/></svg>
<div class="t" style="left:88.02px;top:927.00px;font-size:11.6px;line-height:11.6px;font-weight:400;color:#1c1c1c;letter-spacing:0.108px;-webkit-text-stroke:0.25px #1c1c1c">222 Fir Street</div>
<div class="t" style="left:88.05px;top:943.00px;font-size:11.5px;line-height:11.5px;font-weight:400;color:#777;letter-spacing:-0.018px;">Oregon City</div>
<div style="position:absolute;left:280px;top:930.5px;width:67.5px;height:18.09999999999991px;background:#0ea63f;border-radius:8px"></div>
<div class="t" style="left:288.97px;top:934.00px;font-size:11.6px;line-height:11.6px;font-weight:400;color:#fff;letter-spacing:0.015px;">Approved</div>
<div class="t" style="left:488.88px;top:934.00px;font-size:11.7px;line-height:11.7px;font-weight:400;color:#2a2a2a;letter-spacing:0.398px;-webkit-text-stroke:0.25px #2a2a2a">$52,000</div>
<div class="t" style="left:604.75px;top:935.00px;font-size:11.4px;line-height:11.4px;font-weight:400;color:#f1b60a;letter-spacing:0.121px;-webkit-text-stroke:0.4px #f1b60a">12 days</div>
<div class="t" style="left:839.83px;top:935.00px;font-size:11.8px;line-height:11.8px;font-weight:400;color:#888;letter-spacing:0.015px;">Not scheduled</div>
<div class="t" style="left:1019.12px;top:935.00px;font-size:10.8px;line-height:10.8px;font-weight:700;color:#1c1c1c;letter-spacing:-0.185px;">View</div>
<svg style="position:absolute;left:1048.5px;top:933.5999999999999px;" width="11" height="11" viewBox="0 0 24 24"><path fill="none" stroke="#222" stroke-width="2" stroke-linecap="round" stroke-linejoin="round" d="M13.5 4.5 21 12m0 0-7.5 7.5M21 12H3"/></svg>
<div style="position:absolute;left:0px;top:1014.4px;width:1212px;height:91.60000000000002px;background:#fff"></div>
<div class="t" style="left:37.20px;top:1054.00px;font-size:13.3px;line-height:13.3px;font-weight:400;color:#666;letter-spacing:0.014px;">© 2025 ExteriorOpsHQ. All rights reserved.</div>
<div class="t" style="left:585.90px;top:1054.00px;font-size:13.3px;line-height:13.3px;font-weight:400;color:#666;letter-spacing:-0.136px;">Terms</div>
<div class="t" style="left:639.20px;top:1054.00px;font-size:13.3px;line-height:13.3px;font-weight:400;color:#666;letter-spacing:-0.077px;">Privacy</div>
<div class="t" style="left:700.44px;top:1054.00px;font-size:13.3px;line-height:13.3px;font-weight:400;color:#666;letter-spacing:0.108px;">Contact</div>
<div class="t" style="left:764.90px;top:1054.00px;font-size:13.3px;line-height:13.3px;font-weight:400;color:#666;letter-spacing:-0.736px;">FAQ</div>
<div style="position:absolute;left:1085.2px;top:1044px;width:89.59999999999991px;height:32px;background:#eeeeee;border-radius:16px"></div>
<div style="position:absolute;left:1086px;top:1045px;width:29px;height:30px;background:#fff;border-radius:50%;box-shadow:0 1px 2px rgba(0,0,0,.08)"></div>
<svg style="position:absolute;left:1094.5px;top:1054px;" width="12" height="12" viewBox="0 0 24 24"><path fill="#777" d="M2.25 5.25a3 3 0 0 1 3-3h13.5a3 3 0 0 1 3 3V15a3 3 0 0 1-3 3h-3v.257c0 .597.237 1.17.659 1.591l.621.622a.75.75 0 0 1-.53 1.28h-9a.75.75 0 0 1-.53-1.28l.621-.622a2.25 2.25 0 0 0 .659-1.59V18h-3a3 3 0 0 1-3-3V5.25Zm1.5 0v7.5a1.5 1.5 0 0 0 1.5 1.5h13.5a1.5 1.5 0 0 0 1.5-1.5v-7.5a1.5 1.5 0 0 0-1.5-1.5H5.25a1.5 1.5 0 0 0-1.5 1.5Z"/></svg>
<svg style="position:absolute;left:1123.5px;top:1054px;" width="12" height="12" viewBox="0 0 24 24"><g stroke="#888" stroke-width="2" stroke-linecap="round"><path d="M12 2.5v2M12 19.5v2M2.5 12h2M19.5 12h2M5.3 5.3l1.4 1.4M17.3 17.3l1.4 1.4M5.3 18.7l1.4-1.4M17.3 6.7l1.4-1.4"/></g><circle cx="12" cy="12" r="3.6" fill="#888"/></svg>
<svg style="position:absolute;left:1152.5px;top:1054px;" width="12" height="12" viewBox="0 0 24 24"><path fill="#888" d="M9.528 1.718a.75.75 0 0 1 .162.819A8.97 8.97 0 0 0 9 6a9 9 0 0 0 9 9 8.97 8.97 0 0 0 3.463-.69.75.75 0 0 1 .981.98 10.503 10.503 0 0 1-9.694 6.46c-5.799 0-10.5-4.7-10.5-10.5 0-4.368 2.667-8.112 6.46-9.694a.75.75 0 0 1 .818.162Z"/></svg>
<div style="position:absolute;left:1203.6px;top:2px;width:6.400000000000091px;height:430px;background:#aaaaaa;border-radius:4px"></div>
<div style="position:absolute;left:1203.6px;top:444.5px;width:6.400000000000091px;height:659.5px;background:#aaaaaa;border-radius:4px"></div>
</body></html>
